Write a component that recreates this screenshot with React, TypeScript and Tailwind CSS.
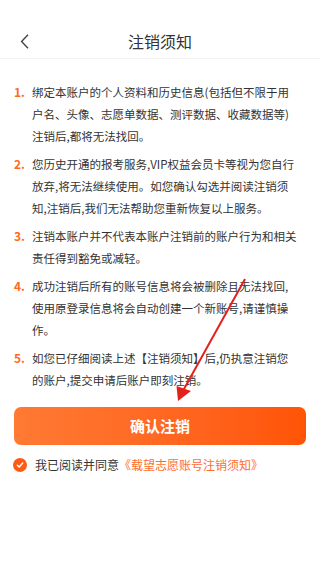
import React from "react";

const ITEMS: string[] = [
  "绑定本账户的个人资料和历史信息(包括但不限于用户名、头像、志愿单数据、测评数据、收藏数据等)注销后,都将无法找回。",
  "您历史开通的报考服务,VIP权益会员卡等视为您自行放弃,将无法继续使用。如您确认勾选并阅读注销须知,注销后,我们无法帮助您重新恢复以上服务。",
  "注销本账户并不代表本账户注销前的账户行为和相关责任得到豁免或减轻。",
  "成功注销后所有的账号信息将会被删除且无法找回,使用原登录信息将会自动创建一个新账号,请谨慎操作。",
  "如您已仔细阅读上述【注销须知】后,仍执意注销您的账户,提交申请后账户即刻注销。",
];

const App: React.FC = () => {
  return (
    <div
      className="relative min-h-[568px] w-[320px] bg-white text-[#333]"
      style={{ fontFamily: '"Noto Sans CJK SC", "Noto Sans", sans-serif' }}
    >
      {/* Header */}
      <div className="border-b border-[#f3f3f3] pt-6">
        <div className="relative flex h-[34px] items-center justify-center">
          <svg
            className="absolute left-[20px] top-[10px]"
            width="10"
            height="15"
            viewBox="0 0 10 15"
            fill="none"
          >
            <path d="M8 0.8 L1.6 7.5 L8 14.2" stroke="#444" strokeWidth="1.4" />
          </svg>
          <span className="text-[16px] leading-none text-[#333]">注销须知</span>
        </div>
      </div>

      {/* Notice list */}
      <div className="flex flex-col gap-[6px] pl-[14px] pr-[22px] pt-[22px]">
        {ITEMS.map((text, i) => (
          <div key={i} className="flex text-[11.5px] leading-[22px]">
            <span className="w-[18px] shrink-0 font-bold text-[#ff6a1e] text-[12px]">
              {i + 1}.
            </span>
            <p className="flex-1">{text}</p>
          </div>
        ))}
      </div>

      {/* Confirm button */}
      <div className="px-[14px] pt-[16px]">
        <button className="flex h-[38px] w-full items-center justify-center rounded-[7px] bg-gradient-to-r from-[#ff7a33] to-[#ff5405] text-[15px] font-bold text-white">
          确认注销
        </button>
      </div>

      {/* Agreement */}
      <div className="flex items-center gap-[8px] px-[13px] pt-[12px] text-[12px] leading-[16px]">
        <span className="flex h-[14px] w-[14px] items-center justify-center rounded-full bg-[#ff5a14]">
          <svg width="8" height="8" viewBox="0 0 8 8" fill="none">
            <path d="M1.3 4.2 L3.2 6 L6.7 2" stroke="#fff" strokeWidth="1.4" strokeLinecap="round" strokeLinejoin="round" />
          </svg>
        </span>
        <span>
          我已阅读并同意<span className="text-[#ff6d2e]">《载望志愿账号注销须知》</span>
        </span>
      </div>

      {/* Red annotation arrow */}
      <svg
        className="pointer-events-none absolute left-0 top-0"
        width="320"
        height="568"
        viewBox="0 0 320 568"
        fill="none"
      >
        <line x1="245" y1="279" x2="179" y2="398" stroke="#e3211c" strokeWidth="2" />
        <path d="M178 401 L176.5 386 L191 391 Z" fill="#e3211c" />
      </svg>
    </div>
  );
};

export default App;
